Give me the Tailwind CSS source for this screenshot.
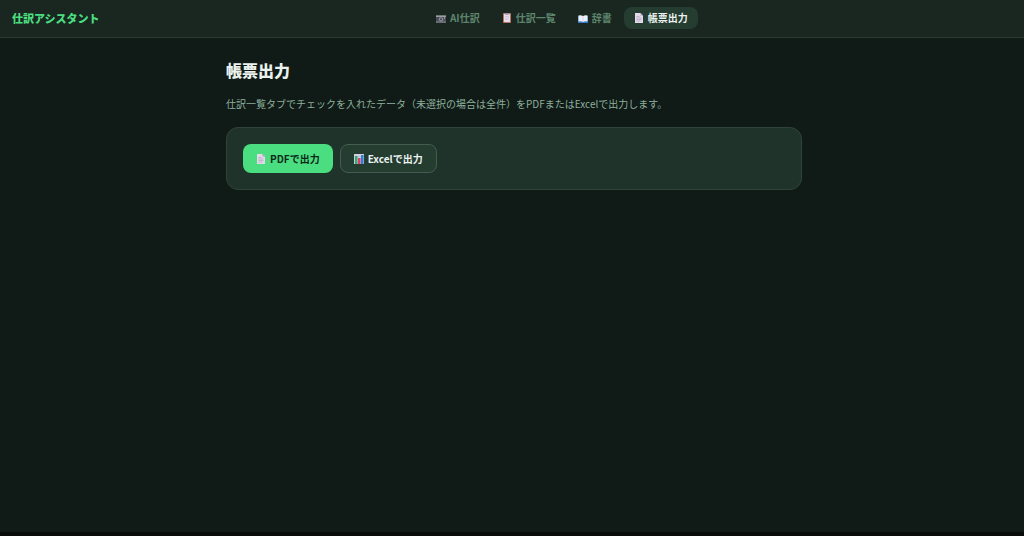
<!DOCTYPE html>
<html lang="ja">
<head>
<meta charset="utf-8">
<meta name="viewport" content="width=device-width, initial-scale=1">
<title>仕訳アシスタント</title>
<script src="https://cdn.jsdelivr.net/npm/@tailwindcss/browser@4"></script>
</head>
<body class="flex min-h-screen flex-col border-b-4 border-[#080b0a] bg-[#101a17] font-['Noto_Sans_CJK_JP',sans-serif] text-[10px] leading-4 text-[#ebf2ee]">
<header class="flex items-center border-b border-[#2b3b34] bg-[#1a2721] pt-[7px] pb-2 pl-3">
  <a href="#" class="text-[11px] font-black text-[#4ade80]">仕訳アシスタント</a>
  <nav class="flex flex-1 justify-center gap-0.5 font-bold text-[#5d856d]">
    <a href="#" class="flex items-center gap-1 rounded-lg px-2.5 py-[3px]">
      <svg class="size-2.5" viewBox="1 1 10 10" aria-hidden="true"><rect x="1" y="3.500" width="10" height="7.500" fill="#696c73"/><rect x="1" y="3.500" width="10" height="1.500" fill="#9b9da2"/><rect x="1" y="5" width="10" height="4" fill="#4b4e55"/><circle cx="6" cy="7.300" r="2.100" fill="#9295a0"/><circle cx="6" cy="7.300" r="1.100" fill="#41464f"/><rect x="9" y="5.500" width="1" height="1" fill="#ddd"/></svg>
      AI仕訳</a>
    <a href="#" class="flex items-center gap-1 rounded-lg px-2.5 py-[3px]">
      <svg class="size-2.5" viewBox="1 1 10 10" aria-hidden="true"><rect x="2" y="1" width="8" height="10" rx=".7" fill="#b9745f"/><path d="M3 2h6v8H3z" fill="#e6dcec"/><rect x="4" y="1" width="4" height="1.800" rx=".5" fill="#9893a9"/><path d="M4 4.500h4M4 6h4M4 7.500h3" stroke="#c9bfd3" stroke-width=".6"/></svg>
      仕訳一覧</a>
    <a href="#" class="flex items-center gap-1 rounded-lg px-2.5 py-[3px]">
      <svg class="size-2.5" viewBox="1 1 10 10" aria-hidden="true"><path d="M1 4h10v7H1z" fill="#347bc5"/><path d="M1.500 3.500Q4 3 6 4 8 3 10.500 3.500v6Q8 9 6 10 4 9 1.500 9.500z" fill="#f0eef7"/><path d="M6 4v6" stroke="#c5c2d8" stroke-width=".6"/></svg>
      辞書</a>
    <a href="#" aria-current="page" class="flex items-center gap-1 rounded-lg bg-[#253c31] px-2.5 py-[3px] text-[#ebf2ee]">
      <svg class="size-2.5" viewBox="1 1 10 10" aria-hidden="true"><path d="M2 1h5.500L10 3.500V11H2z" fill="#e2d9e9"/><path d="M7.500 1v2.500H10z" fill="#a99fb9"/><path d="M3.500 4.500h3M3.500 6h5M3.500 7.500h5M3.500 9h4" stroke="#af9dba" stroke-width=".6"/></svg>
      帳票出力</a>
  </nav>
</header>
<main class="w-full pl-1">
  <div class="mx-auto max-w-[576px] pt-5">
    <h1 class="text-base leading-6 font-black">帳票出力</h1>
    <p class="mt-3.5 text-[#8db09c]">仕訳一覧タブでチェックを入れたデータ（未選択の場合は全件）をPDFまたはExcelで出力します。</p>
    <section class="mt-[15px] flex gap-[7px] rounded-xl border border-[#2e4439] bg-[#20332b] p-4 leading-[15px]">
      <button type="button" class="flex items-center gap-1 rounded-lg bg-[#4ade80] px-[13px] py-1.5 font-bold text-[#0d2919]">
        <svg class="size-2.5" viewBox="1 1 10 10" aria-hidden="true"><path d="M2 1h5.500L10 3.500V11H2z" fill="#e2d9e9"/><path d="M7.500 1v2.500H10z" fill="#a99fb9"/><path d="M3.500 4.500h3M3.500 6h5M3.500 7.500h5M3.500 9h4" stroke="#af9dba" stroke-width=".6"/></svg>
        PDFで出力</button>
      <button type="button" class="flex items-center gap-1 rounded-lg border border-[#455c50] bg-[#253c31] px-[13px] py-1.5 font-bold">
        <svg class="size-2.5" viewBox="1 1 10 10" aria-hidden="true"><rect x="1" y="1" width="10" height="10" fill="#d3cfe0"/><path d="M1 3.500h10M1 6h10M1 8.500h10" stroke="#aaa6bd" stroke-width=".4"/><rect x="2" y="3" width="2.500" height="8" fill="#35a873"/><rect x="5" y="5" width="2.500" height="6" fill="#e53c67"/><rect x="8" y="2" width="2.500" height="9" fill="#2682d6"/></svg>
        Excelで出力</button>
    </section>
  </div>
</main>
</body>
</html>
